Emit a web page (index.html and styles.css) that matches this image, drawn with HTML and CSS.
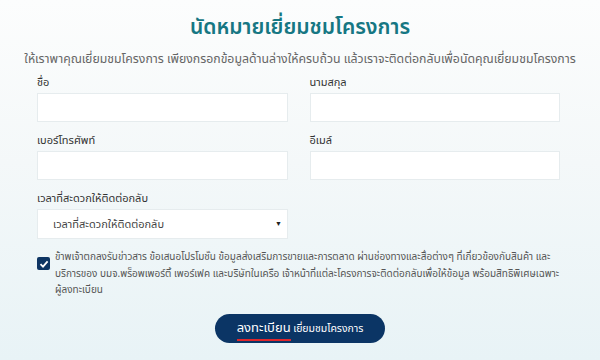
FILE: index.html
```html
<!DOCTYPE html>
<html lang="th">
<head>
    <meta charset="UTF-8">
    <meta name="viewport" content="width=device-width, initial-scale=1.0">
    <title>นัดหมายเยี่ยมชมโครงการ</title>
    <link rel="stylesheet" href="styles.css">
</head>
<body>

    <div id="appointment">
        <h1 class="title">นัดหมายเยี่ยมชมโครงการ</h1>
        <p class="intro">ให้เราพาคุณเยี่ยมชมโครงการ เพียงกรอกข้อมูลด้านล่างให้ครบถ้วน แล้วเราจะติดต่อกลับเพื่อนัดคุณเยี่ยมชมโครงการ</p>

        <form class="form">
            <div class="row">
                <label class="field">
                    <span class="label">ชื่อ</span>
                    <input type="text" class="input">
                </label>
                <label class="field">
                    <span class="label">นามสกุล</span>
                    <input type="text" class="input">
                </label>
            </div>
            <div class="row">
                <label class="field">
                    <span class="label">เบอร์โทรศัพท์</span>
                    <input type="text" class="input">
                </label>
                <label class="field">
                    <span class="label">อีเมล์</span>
                    <input type="text" class="input">
                </label>
            </div>
            <div class="row">
                <label class="field">
                    <span class="label">เวลาที่สะดวกให้ติดต่อกลับ</span>
                    <span class="select">
                        <span>เวลาที่สะดวกให้ติดต่อกลับ</span>
                        <span class="arrow">&#9660;</span>
                    </span>
                </label>
            </div>

            <div class="consent">
                <span class="checkbox">
                    <svg width="10" height="10" viewBox="0 0 10 10"><path d="M1.5 5.2 L4 7.6 L8.6 2.4" fill="none" stroke="#fff" stroke-width="1.8"/></svg>
                </span>
                <p class="consent-text">ข้าพเจ้าตกลงรับข่าวสาร ข้อเสนอโปรโมชั่น ข้อมูลส่งเสริมการขายและการตลาด ผ่านช่องทางและสื่อต่างๆ ที่เกี่ยวข้องกับสินค้า และบริการของ บมจ.พร็อพเพอร์ตี้ เพอร์เฟค และบริษัทในเครือ เจ้าหน้าที่แต่ละโครงการจะติดต่อกลับเพื่อให้ข้อมูล พร้อมสิทธิพิเศษเฉพาะผู้ลงทะเบียน</p>
            </div>

            <div class="actions">
                <button type="button" class="submit"><span class="submit-main">ลงทะเบียน</span> เยี่ยมชมโครงการ</button>
            </div>
        </form>
    </div>

</body>
</html>
```

FILE: styles.css
```css
body {
    margin: 0;
    height: 360px;
    overflow: hidden;
    font-family: "Noto Sans Thai", "Noto Sans", "Liberation Sans", sans-serif;
    background: linear-gradient(to bottom, #fcfdfd 0%, #f4f8f9 45%, #e8f3f6 100%);
    color: #555;
}

#appointment {
    padding-top: 12px;
}

.title {
    margin: 0;
    text-align: center;
    font-size: 21px;
    font-weight: 600;
    color: #167783;
    line-height: 32px;
}

.intro {
    margin: 6px 0 0;
    text-align: center;
    font-size: 12.3px;
    color: #666;
    line-height: 20px;
}

.form {
    width: 523px;
    margin: 3px auto 0 37px;
}

.row {
    display: flex;
    gap: 22px;
    margin-bottom: 9px;
}

.field {
    display: flex;
    flex-direction: column;
    width: 251px;
}

.label {
    font-size: 11px;
    color: #333;
    line-height: 20px;
    height: 20px;
}

.input {
    box-sizing: border-box;
    height: 29px;
    border: 1px solid #e6ecee;
    background: #fff;
    margin: 0;
}

.select {
    box-sizing: border-box;
    height: 30px;
    border: 1px solid #e6ecee;
    background: #fff;
    display: flex;
    align-items: center;
    justify-content: space-between;
    padding: 0 5px 0 15px;
    font-size: 11px;
    color: #444;
}

.arrow {
    font-size: 7px;
    color: #222;
}

.consent {
    display: flex;
    gap: 5px;
    margin-top: 10px;
}

.checkbox {
    flex: none;
    width: 13px;
    height: 13px;
    margin-top: 8px;
    background: #0e3563;
    border-radius: 2px;
    display: flex;
    align-items: center;
    justify-content: center;
}

.consent-text {
    margin: 0;
    font-size: 10px;
    line-height: 16.5px;
    color: #555;
}

.actions {
    display: flex;
    justify-content: center;
    margin: 15px 0 0 -37px;
    width: 600px;
}

.submit {
    width: 170px;
    height: 29px;
    border: none;
    border-radius: 15px;
    background: #0b3565;
    color: #fff;
    font-family: inherit;
    font-size: 10.5px;
    padding: 0;
}

.submit-main {
    font-size: 13px;
    border-bottom: 2px solid #e0262b;
    padding-bottom: 1px;
}
```
